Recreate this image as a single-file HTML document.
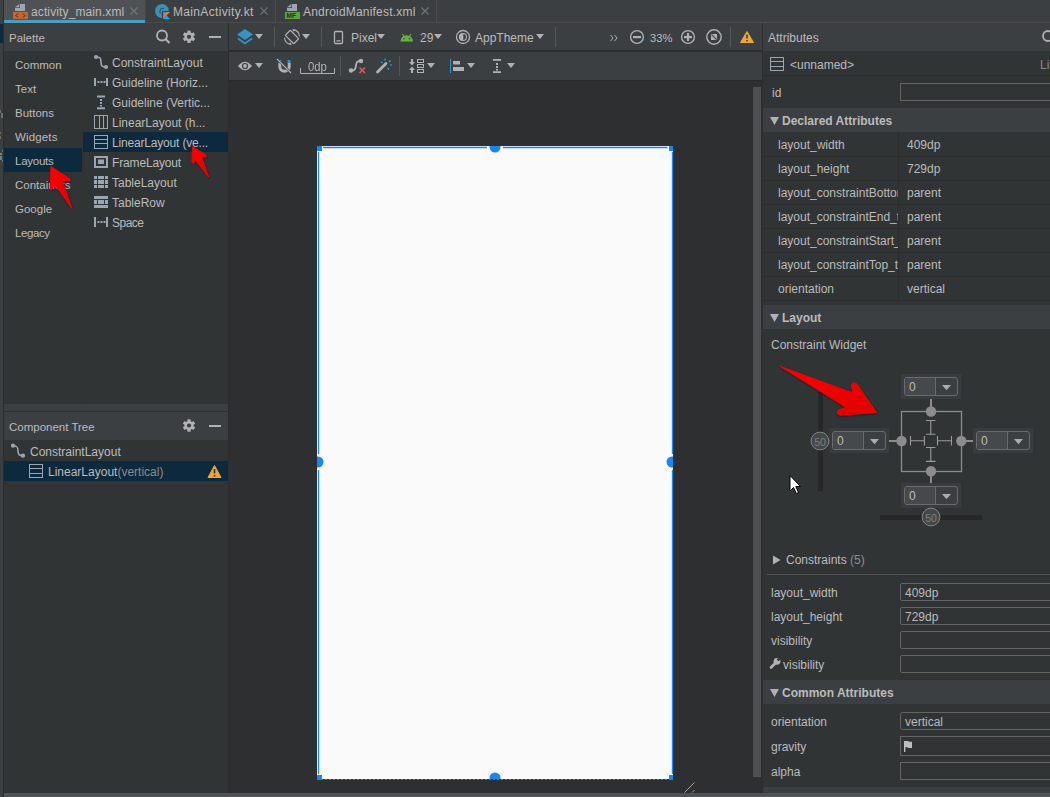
<!DOCTYPE html>
<html><head><meta charset="utf-8">
<style>
*{box-sizing:border-box;margin:0;padding:0}
html,body{width:1050px;height:797px;overflow:hidden;background:#3c3f41}
body{position:relative;font-family:"Liberation Sans",sans-serif;font-size:12px;color:#bbbbbb}
.a{position:absolute}
.t{position:absolute;white-space:nowrap;line-height:14px}
svg{position:absolute;overflow:visible}
</style></head><body>

<!-- left strip -->
<div class="a" style="left:0;top:0;width:3px;height:797px;background:#3c3f41"></div>
<div class="a" style="left:0;top:24px;width:3px;height:19px;background:#0d293e"></div>
<div class="a" style="left:3px;top:0;width:1px;height:797px;background:#2b2d2f"></div>

<svg style="left:0;top:0" width="4" height="200">
  <rect x="0" y="110" width="1" height="3" fill="#8a7a60" opacity="0.8"/>
  <rect x="1.5" y="113" width="1.2" height="5" fill="#9fb0b8" opacity="0.7"/>
  <rect x="0" y="132" width="1" height="2" fill="#8a7a60" opacity="0.7"/>
  <rect x="0" y="136" width="1" height="3" fill="#8a7a60" opacity="0.7"/>
  <rect x="2" y="150" width="1" height="1.5" fill="#7aa0c0" opacity="0.7"/>
  <rect x="0" y="153" width="2" height="2" fill="#a0a0a0" opacity="0.7"/>
  <rect x="0" y="156" width="2" height="4" fill="#9aabb5" opacity="0.6"/>
  <rect x="2" y="160" width="1" height="1.5" fill="#7aa0c0" opacity="0.7"/>
</svg>
<!-- tab bar -->
<div class="a" style="left:4px;top:0;width:1046px;height:23px;background:#3c3f41"></div>
<div class="a" style="left:4px;top:22px;width:1046px;height:1px;background:#4b4b4c"></div>
<div class="a" style="left:4px;top:0;width:141px;height:23px;background:#4e5254"></div>
<div class="a" style="left:4px;top:20px;width:141px;height:3px;background:#4a9fc0"></div>
<div class="a" style="left:145px;top:0;width:1px;height:23px;background:#454546"></div>
<div class="a" style="left:275px;top:0;width:1px;height:22px;background:#4b4b4c"></div>
<div class="a" style="left:436px;top:0;width:1px;height:22px;background:#4b4b4c"></div>


<!-- tab contents -->
<svg style="left:0;top:0" width="450" height="23">
  <!-- xml icon -->
  <path d="M20 4 H25 V11 H15 V8 H20 Z" fill="#9aa7b0"/>
  <path d="M15 7.3 L19.3 4 V7.3 Z" fill="#9aa7b0"/>
  <rect x="13" y="12" width="15" height="7" fill="#cc6633" opacity="0.95"/>
  <path d="M18 13.5 L16 15.5 L18 17.5 M23 13.5 L25 15.5 L23 17.5" stroke="#2b2b2b" stroke-width="1" fill="none"/>
  <!-- close -->
  <path d="M130.5 7.5 L137.5 14.5 M137.5 7.5 L130.5 14.5" stroke="#6d7578" stroke-width="1.1"/>
  <!-- kotlin activity icon -->
  <circle cx="162" cy="11" r="7" fill="#3e8fb0"/>
  <path d="M163.8 8.6 A2.8 2.8 0 1 0 161.5 13.8" fill="none" stroke="#28424d" stroke-width="0.9"/>
  <rect x="162" y="11" width="9" height="9" fill="#3c3f41"/>
  <defs><linearGradient id="kg" x1="1" y1="0" x2="0" y2="1"><stop offset="0" stop-color="#ff8a00"/><stop offset="0.6" stop-color="#f06a50"/><stop offset="1" stop-color="#d05ad0"/></linearGradient></defs>
  <path d="M163 12 H166.5 L163 15.5 Z" fill="#08b0f8"/>
  <path d="M166.5 12 H170 L163 19 V15.5 Z" fill="url(#kg)"/>
  <path d="M163 19 L166.5 15.5 L170 19 Z" fill="#08b0f8"/>
  <path d="M260.5 7.5 L267.5 14.5 M267.5 7.5 L260.5 14.5" stroke="#6d7578" stroke-width="1.1"/>
  <!-- manifest icon -->
  <path d="M292 4 H297 V11 H287 V8 H292 Z" fill="#9aa7b0"/>
  <path d="M287 7.3 L291.3 4 V7.3 Z" fill="#9aa7b0"/>
  <rect x="285" y="12" width="15" height="7" fill="#62b543" opacity="0.85"/>
  <text x="286.5" y="18.3" font-family="Liberation Sans" font-size="6.5" font-weight="bold" fill="#2b2b2b">MF</text>
  <path d="M421.5 7.5 L428.5 14.5 M428.5 7.5 L421.5 14.5" stroke="#6d7578" stroke-width="1.1"/>
</svg>
<div class="t" style="left:31px;top:5px;letter-spacing:0.12px">activity_main.xml</div>
<div class="t" style="left:173px;top:5px;letter-spacing:0.33px">MainActivity.kt</div>
<div class="t" style="left:303px;top:5px;letter-spacing:0.2px">AndroidManifest.xml</div>

<!-- palette panel -->
<div class="a" style="left:4px;top:23px;width:224px;height:28px;background:#3c3f41"></div>
<div class="a" style="left:4px;top:51px;width:224px;height:353px;background:#313435"></div>
<div class="a" style="left:82px;top:51px;width:1px;height:353px;background:#2f3133"></div>
<div class="a" style="left:4px;top:404px;width:224px;height:7px;background:#3c3f41"></div>
<div class="a" style="left:4px;top:411px;width:224px;height:1px;background:#2b2d2f"></div>
<div class="a" style="left:4px;top:412px;width:224px;height:28px;background:#3c3f41"></div>
<div class="a" style="left:4px;top:440px;width:224px;height:353px;background:#313435"></div>
<div class="a" style="left:228px;top:23px;width:1px;height:770px;background:#2b2d2f"></div>


<!-- palette content -->
<div class="t" style="left:9px;top:31px;font-size:11.5px">Palette</div>
<svg style="left:0;top:0" width="230" height="52">
  <circle cx="162" cy="35.5" r="5" fill="none" stroke="#afb1b3" stroke-width="1.8"/>
  <path d="M165.5 39 L169.5 43" stroke="#afb1b3" stroke-width="2.2"/>
  <g transform="translate(189 36.8)" fill="#afb1b3">
    <circle r="4.6"/>
    <rect x="-1.6" y="-6.2" width="3.2" height="12.4"/>
    <rect x="-1.6" y="-6.2" width="3.2" height="12.4" transform="rotate(60)"/>
    <rect x="-1.6" y="-6.2" width="3.2" height="12.4" transform="rotate(120)"/>
  </g>
  <circle cx="189" cy="36.8" r="2.1" fill="#3c3f41"/>
  <rect x="209" y="36" width="12" height="2" fill="#afb1b3"/>
</svg>
<div class="a" style="left:4px;top:148px;width:78px;height:24px;background:#0d293e"></div>
<div class="a" style="left:83px;top:132px;width:145px;height:20px;background:#0d293e"></div>
<div class="t" style="left:15px;top:58px;font-size:11.5px">Common</div>
<div class="t" style="left:15px;top:82px;font-size:11.5px">Text</div>
<div class="t" style="left:15px;top:106px;font-size:11.5px">Buttons</div>
<div class="t" style="left:15px;top:130px;font-size:11.5px;letter-spacing:0.15px">Widgets</div>
<div class="t" style="left:15px;top:154px;font-size:11.5px;letter-spacing:-0.25px">Layouts</div>
<div class="t" style="left:15px;top:178px;font-size:11.5px">Containers</div>
<div class="t" style="left:15px;top:202px;font-size:11.5px">Google</div>
<div class="t" style="left:15px;top:226px;font-size:11.5px;letter-spacing:-0.4px">Legacy</div>

<div class="t" style="left:112px;top:56px;">ConstraintLayout</div>
<div class="t" style="left:112px;top:76px;">Guideline (Horiz...</div>
<div class="t" style="left:112px;top:96px;">Guideline (Vertic...</div>
<div class="t" style="left:112px;top:116px;">LinearLayout (h...</div>
<div class="t" style="left:112px;top:136px;letter-spacing:-0.18px">LinearLayout (ve...</div>
<div class="t" style="left:112px;top:156px;letter-spacing:-0.15px">FrameLayout</div>
<div class="t" style="left:112px;top:176px;">TableLayout</div>
<div class="t" style="left:112px;top:196px;">TableRow</div>
<div class="t" style="left:112px;top:216px;letter-spacing:-0.5px">Space</div>
<svg style="left:0;top:0" width="230" height="240" fill="none" stroke="#9aa7b0">
  <!-- constraint layout -->
  <path d="M96 57 C100 57 101 58 101 62 C101 66 102 67 106 67" stroke-width="1.6"/>
  <circle cx="96" cy="57" r="2.1" fill="#9aa7b0" stroke="none"/>
  <circle cx="106" cy="67" r="2.1" fill="#9aa7b0" stroke="none"/>
  <!-- guideline horiz -->
  <g fill="#9aa7b0" stroke="none">
    <rect x="94" y="78" width="2" height="8"/><rect x="106" y="78" width="2" height="8"/>
    <rect x="97.5" y="81" width="2" height="2"/><rect x="100.5" y="81" width="2" height="2"/><rect x="103.5" y="81" width="2" height="2"/>
  <!-- guideline vert -->
    <rect x="97" y="95.5" width="8" height="2"/><rect x="97" y="107.3" width="8" height="2"/>
    <rect x="100" y="99" width="2" height="2"/><rect x="100" y="102" width="2" height="2"/><rect x="100" y="105" width="2" height="1.5"/>
  </g>
  <!-- linear h -->
  <rect x="94.5" y="115.5" width="13" height="13"/>
  <path d="M99.5 116 V128 M103.5 116 V128"/>
  <!-- linear v -->
  <rect x="94.5" y="135.5" width="13" height="13"/>
  <path d="M95 139.5 H107 M95 143.5 H107"/>
  <g fill="#9aa7b0" stroke="none">
  <!-- frame -->
    <path d="M94 156 H108 V168 H94 Z M96 158 V166 H106 V158 Z" fill-rule="evenodd"/>
    <rect x="98" y="159.5" width="6" height="4.5"/>
  <!-- table layout -->
    <rect x="94" y="176" width="3" height="3"/><rect x="98" y="176" width="6" height="3"/><rect x="105" y="176" width="3" height="3"/>
    <rect x="94" y="180" width="3" height="4"/><rect x="98" y="180" width="6" height="4"/><rect x="105" y="180" width="3" height="4"/>
    <rect x="94" y="185" width="3" height="3"/><rect x="98" y="185" width="6" height="3"/><rect x="105" y="185" width="3" height="3"/>
  <!-- table row -->
    <rect x="94" y="196" width="14" height="3"/>
    <rect x="94" y="200" width="3" height="4"/><rect x="98" y="200" width="6" height="4"/><rect x="105" y="200" width="3" height="4"/>
    <rect x="94" y="205" width="14" height="3"/>
  <!-- space -->
    <rect x="94" y="217" width="2" height="10"/><rect x="106" y="217" width="2" height="10"/>
    <rect x="97.5" y="221" width="2" height="2"/><rect x="100.5" y="221" width="2" height="2"/><rect x="103.5" y="221" width="2" height="2"/>
  </g>
</svg>


<!-- component tree -->
<div class="t" style="left:9px;top:420px;font-size:11.5px">Component Tree</div>
<svg style="left:0;top:400px" width="230" height="90">
  <g transform="translate(189 25.5)" fill="#afb1b3">
    <circle r="4.6"/>
    <rect x="-1.6" y="-6.2" width="3.2" height="12.4"/>
    <rect x="-1.6" y="-6.2" width="3.2" height="12.4" transform="rotate(60)"/>
    <rect x="-1.6" y="-6.2" width="3.2" height="12.4" transform="rotate(120)"/>
  </g>
  <circle cx="189" cy="25.5" r="2.1" fill="#3c3f41"/>
  <rect x="209" y="25" width="12" height="2" fill="#afb1b3"/>
</svg>
<div class="a" style="left:4px;top:461px;width:224px;height:20px;background:#0d293e"></div>
<div class="t" style="left:30px;top:445px;">ConstraintLayout</div>
<div class="t" style="left:48px;top:465px;">LinearLayout<span style="color:#8c8c8c">(vertical)</span></div>
<svg style="left:0;top:440px" width="230" height="45" fill="none" stroke="#9aa7b0">
  <path d="M13 5.7 C17 5.7 18 7 18 10.7 C18 14.5 19 15.7 23 15.7" stroke-width="1.6"/>
  <circle cx="13" cy="5.7" r="2.1" fill="#9aa7b0" stroke="none"/>
  <circle cx="23" cy="15.7" r="2.1" fill="#9aa7b0" stroke="none"/>
  <rect x="29.5" y="24.5" width="13" height="13"/>
  <path d="M30 28.5 H42 M30 33.5 H42"/>
  <path d="M214.5 25.5 L221 37.5 L208 37.5 Z" fill="#f0a732" stroke="#f0a732" stroke-width="1" stroke-linejoin="round"/>
  <path d="M214.5 29 V33.5 M214.5 35 V36.5" stroke="#2b2b2b" stroke-width="1.6"/>
</svg>

<!-- design toolbars -->
<div class="a" style="left:229px;top:23px;width:533px;height:27px;background:#3c3f41"></div>
<div class="a" style="left:229px;top:50px;width:533px;height:2px;background:#2b2d2f"></div>
<div class="a" style="left:229px;top:52px;width:533px;height:28px;background:#3c3f41"></div>
<div class="a" style="left:229px;top:80px;width:533px;height:713px;background:#2e2f31"></div>
<div class="a" style="left:229px;top:80px;width:533px;height:1px;background:#292a2b"></div>


<!-- toolbar 1 content -->
<svg style="left:0;top:0" width="770" height="85">
  <g fill="#afb1b3">
    <!-- separators -->
    <rect x="274" y="27" width="1" height="20" fill="#55585a"/>
    <rect x="321" y="27" width="1" height="20" fill="#55585a"/>
    <rect x="555" y="27" width="1" height="20" fill="#55585a"/>
    <rect x="730" y="27" width="1" height="20" fill="#55585a"/>
    <!-- triangles -->
    <path d="M255 34 H263 L259 39 Z"/>
    <path d="M302 34 H310 L306 39 Z"/>
    <path d="M377 34 H385 L381 39 Z"/>
    <path d="M434 34 H442 L438 39 Z"/>
    <path d="M536 34 H544 L540 39 Z"/>
  </g>
  <!-- layers -->
  <path d="M237 34.5 L245 29 L253 34.5 L245 40 Z" fill="#3592c4"/>
  <path d="M238 38.5 L245 43.5 L252 38.5" fill="none" stroke="#3592c4" stroke-width="1.8"/>
  <!-- rotate -->
  <g transform="translate(292 37) rotate(-45)" fill="none" stroke="#afb1b3" stroke-width="1.2">
    <rect x="-3.6" y="-6" width="7.2" height="12" rx="0.8"/>
  </g>
  <path d="M293.3 29.6 A7.5 7.5 0 0 1 299.5 36.3" fill="none" stroke="#afb1b3" stroke-width="1.1"/>
  <path d="M290.7 44.4 A7.5 7.5 0 0 1 284.5 37.7" fill="none" stroke="#afb1b3" stroke-width="1.1"/>
  <path d="M292.5 28.8 L295.5 30.2 L293.2 31.5 Z M291.5 45.2 L288.5 43.8 L290.8 42.5 Z" fill="#afb1b3"/>
  <!-- phone -->
  <rect x="334.5" y="31.5" width="8" height="12" rx="1" fill="none" stroke="#afb1b3" stroke-width="1.3"/>
  <rect x="336.5" y="40.2" width="4" height="1.2" fill="#afb1b3"/>
  <!-- android -->
  <path d="M400.5 41.5 A6.2 6.2 0 0 1 412.9 41.5 Z" fill="#62b543"/>
  <path d="M402.5 34 L403.8 36 M411 34 L409.7 36" stroke="#62b543" stroke-width="1.2"/>
  <circle cx="404" cy="38.8" r="0.8" fill="#3c3f41"/><circle cx="409.4" cy="38.8" r="0.8" fill="#3c3f41"/>
  <!-- theme -->
  <circle cx="463" cy="37" r="6.5" fill="none" stroke="#afb1b3" stroke-width="1.3"/>
  <circle cx="463" cy="37" r="3.5" fill="none" stroke="#afb1b3" stroke-width="1.1"/>
  <path d="M463.3 33 A4 4 0 0 0 463.3 41 Z" fill="#afb1b3"/>
  <!-- chevrons -->
  <path d="M610.5 35 L613 38 L610.5 41 M614.5 35 L617 38 L614.5 41" fill="none" stroke="#afb1b3" stroke-width="1"/>
  <!-- zoom -->
  <circle cx="637" cy="37" r="6.4" fill="none" stroke="#afb1b3" stroke-width="1.4"/>
  <rect x="633" y="36" width="8" height="2.2" fill="#afb1b3"/>
  <circle cx="688" cy="37" r="6.4" fill="none" stroke="#afb1b3" stroke-width="1.4"/>
  <rect x="684" y="36" width="8" height="2.2" fill="#afb1b3"/>
  <rect x="686.9" y="33" width="2.2" height="8" fill="#afb1b3"/>
  <circle cx="714" cy="37" r="7.2" fill="none" stroke="#afb1b3" stroke-width="1.4"/>
  <rect x="711" y="34" width="6" height="6" fill="#afb1b3"/>
  <path d="M711.6 34.6 L716.6 39.6" stroke="#3c3f41" stroke-width="1.1"/>
  <!-- warning -->
  <path d="M747 31.5 L753.5 42.5 L740.5 42.5 Z" fill="#f0a732" stroke="#f0a732" stroke-width="1" stroke-linejoin="round"/>
  <path d="M747 34.5 V38.5 M747 40 V41.5" stroke="#3c3f41" stroke-width="1.6"/>
</svg>
<div class="t" style="left:351px;top:31px;">Pixel</div>
<div class="t" style="left:420px;top:31px;">29</div>
<div class="t" style="left:475px;top:31px;">AppTheme</div>
<div class="t" style="left:650px;top:31px;font-size:11.2px">33%</div>

<!-- toolbar 2 content -->
<svg style="left:0;top:0" width="770" height="85">
  <g fill="#afb1b3">
    <rect x="340" y="56" width="1" height="20" fill="#55585a"/>
    <rect x="399" y="56" width="1" height="20" fill="#55585a"/>
    <path d="M255 63 H263 L259 68 Z"/>
    <path d="M427 63 H435 L431 68 Z"/>
    <path d="M467 63 H475 L471 68 Z"/>
    <path d="M507 63 H515 L511 68 Z"/>
  </g>
  <!-- eye -->
  <path d="M238 66 Q245 57.5 252 66 Q245 74.5 238 66 Z" fill="#afb1b3"/>
  <circle cx="245" cy="66" r="3.1" fill="#3c3f41"/>
  <circle cx="245" cy="66" r="1.9" fill="#afb1b3"/>
  <!-- magnet -->
  <path d="M279.8 63 V66.5 A4.7 4.7 0 0 0 289.2 66.5 V63" fill="none" stroke="#afb1b3" stroke-width="3"/>
  <rect x="278.3" y="60" width="3" height="2.5" fill="#3592c4"/>
  <rect x="287.5" y="60" width="3" height="3" fill="#3592c4"/>
  <path d="M277 59 L291 73" stroke="#3c3f41" stroke-width="2.4"/>
  <path d="M277 59 L291 73" stroke="#afb1b3" stroke-width="1.1"/>
  <!-- ruler -->
  <path d="M300.5 68 V73.5 H334.5 V68" fill="none" stroke="#afb1b3" stroke-width="1"/>
  <!-- constraint x -->
  <path d="M351 70.5 C355 70.5 355.5 69 356 65.5 C356.5 62 357 61 361 61" fill="none" stroke="#afb1b3" stroke-width="1.8"/>
  <circle cx="351" cy="70.5" r="2.2" fill="#afb1b3"/><circle cx="361" cy="61" r="2.2" fill="#afb1b3"/>
  <path d="M359.5 67.5 L365 73 M365 67.5 L359.5 73" stroke="#e05555" stroke-width="1.7"/>
  <!-- wand -->
  <path d="M377.5 72 L386 63.5" stroke="#afb1b3" stroke-width="2.8" stroke-linecap="round"/>
  <path d="M385 60.5 V58.5 M389 62 L390.5 60.5 M390 65 H392 M387.5 68 L389 69.5 M381 62 L382.5 63" stroke="#3ea3dc" stroke-width="1.1"/>
  <!-- pack -->
  <path d="M411 59 H413 V62 H415 L412 65.5 L409 62 H411 Z M411 73 H413 V70 H415 L412 66.5 L409 70 H411 Z" fill="#afb1b3"/>
  <rect x="417.5" y="59.5" width="6" height="3" fill="none" stroke="#afb1b3" stroke-width="1"/>
  <rect x="417.5" y="64.5" width="6" height="3" fill="none" stroke="#afb1b3" stroke-width="1"/>
  <rect x="417.5" y="69.5" width="6" height="3" fill="none" stroke="#afb1b3" stroke-width="1"/>
  <!-- align -->
  <rect x="450" y="59" width="1" height="14" fill="#3592c4"/>
  <rect x="453" y="61" width="7" height="3.5" fill="#afb1b3"/>
  <rect x="453" y="67" width="11" height="4" fill="#afb1b3"/>
  <!-- guideline -->
  <rect x="493" y="59" width="8" height="1.8" fill="#afb1b3"/>
  <rect x="493" y="71.2" width="8" height="1.8" fill="#afb1b3"/>
  <rect x="496" y="63" width="2" height="2" fill="#afb1b3"/><rect x="496" y="66" width="2" height="2" fill="#afb1b3"/><rect x="496" y="69" width="2" height="1.5" fill="#afb1b3"/>
</svg>
<div class="t" style="left:307.5px;top:60px;font-size:13.5px;color:#afb1b3;transform:scaleX(0.84);transform-origin:0 0;-webkit-font-smoothing:antialiased">0dp</div>


<!-- design surface content -->
<div class="a" style="left:753px;top:87px;width:8px;height:690px;background:#4f5051"></div>
<div class="a" style="left:317px;top:146px;width:356px;height:633px;background:#fafafa"></div>
<svg style="left:0;top:0" width="760" height="797">
  <g fill="none" stroke="#1a86f0" stroke-width="1.3">
    <path d="M323 147.5 H487 M503 147.5 H667.5"/>
    <path d="M318.5 152 V454 M318.5 470 V774"/>
    <path d="M672.5 152 V454 M672.5 470 V774"/>
  </g>
  <rect x="317" y="146" width="5" height="5" fill="#1a86f0"/>
  <rect x="669" y="146" width="4" height="5" fill="#1a86f0"/>
  <rect x="317" y="775" width="5" height="5" fill="#1a86f0"/>
  <rect x="669" y="775" width="4" height="5" fill="#1a86f0"/>
  <clipPath id="cp"><rect x="317" y="146" width="356" height="633"/></clipPath>
  <g clip-path="url(#cp)" fill="#1a86f0" stroke="#fcfcfc" stroke-width="1.3">
    <circle cx="495" cy="147" r="6.2"/>
    <circle cx="318" cy="462" r="6.2"/>
    <circle cx="672" cy="462" r="6.2"/>
    <circle cx="495" cy="778" r="6.2"/>
  </g>
  <path d="M317 779.5 H669" stroke="#1a86f0" fill="none" stroke-dasharray="2 2" stroke-width="1.1"/>
  <path d="M684.5 792.5 L694.5 782.5 M692 792.5 L694.5 790" stroke="#b0b0b0" stroke-width="0.9"/>
</svg>

<!-- attributes panel -->
<div class="a" style="left:762px;top:23px;width:1px;height:770px;background:#2b2d2f"></div>
<div class="a" style="left:763px;top:23px;width:287px;height:28px;background:#3c3f41"></div>
<div class="a" style="left:763px;top:51px;width:287px;height:742px;background:#313435"></div>


<!-- attributes content -->
<div class="t" style="left:768px;top:31px;">Attributes</div>
<svg style="left:1030px;top:28px" width="20" height="20"><circle cx="18" cy="8" r="5" fill="none" stroke="#afb1b3" stroke-width="1.8"/></svg>
<div class="a" style="left:763px;top:75px;width:287px;height:1px;background:#2e2d2e"></div>
<svg style="left:0;top:0" width="1050" height="800" fill="none" stroke="#9aa7b0">
  <rect x="770.5" y="57.5" width="13" height="13"/>
  <path d="M771 61.5 H783 M771 66.5 H783"/>
</svg>
<div class="t" style="left:790px;top:58px;">&lt;unnamed&gt;</div>
<div class="t" style="left:1040px;top:58px;color:#8c8c8c">Li</div>
<div class="t" style="left:772px;top:86px;">id</div>
<div class="a" style="left:900px;top:83px;width:160px;height:18px;border:1px solid #646464;background:#313435"></div>

<div class="a" style="left:763px;top:108px;width:287px;height:24px;background:#3c3f41"></div>
<div class="t" style="left:782px;top:114px;font-weight:bold;">Declared Attributes</div>

<div class="a" style="left:898px;top:132px;width:1px;height:168px;background:#2b2d2f"></div>
<div class="a" style="left:763px;top:156px;width:287px;height:1px;background:#2b2d2f"></div>
<div class="a" style="left:763px;top:180px;width:287px;height:1px;background:#2b2d2f"></div>
<div class="a" style="left:763px;top:204px;width:287px;height:1px;background:#2b2d2f"></div>
<div class="a" style="left:763px;top:228px;width:287px;height:1px;background:#2b2d2f"></div>
<div class="a" style="left:763px;top:252px;width:287px;height:1px;background:#2b2d2f"></div>
<div class="a" style="left:763px;top:276px;width:287px;height:1px;background:#2b2d2f"></div>
<div class="a" style="left:763px;top:300px;width:287px;height:1px;background:#2b2d2f"></div>
<div class="a" style="left:778px;top:132px;width:120px;height:168px;overflow:hidden">
  <div class="t" style="left:0;top:6px;">layout_width</div>
  <div class="t" style="left:0;top:30px;">layout_height</div>
  <div class="t" style="left:0;top:54px;">layout_constraintBottom_toBottomOf</div>
  <div class="t" style="left:0;top:78px;">layout_constraintEnd_toEndOf</div>
  <div class="t" style="left:0;top:102px;">layout_constraintStart_toStartOf</div>
  <div class="t" style="left:0;top:126px;">layout_constraintTop_toTopOf</div>
  <div class="t" style="left:0;top:150px;">orientation</div>
</div>
<div class="t" style="left:907px;top:138px;">409dp</div>
<div class="t" style="left:907px;top:162px;">729dp</div>
<div class="t" style="left:907px;top:186px;">parent</div>
<div class="t" style="left:907px;top:210px;">parent</div>
<div class="t" style="left:907px;top:234px;">parent</div>
<div class="t" style="left:907px;top:258px;">parent</div>
<div class="t" style="left:907px;top:282px;">vertical</div>

<div class="a" style="left:763px;top:305px;width:287px;height:24px;background:#3c3f41"></div>
<div class="t" style="left:782px;top:311px;font-weight:bold;">Layout</div>
<div class="t" style="left:771px;top:338px;">Constraint Widget</div>

<div class="t" style="left:786px;top:553px;">Constraints <span style="color:#8c8c8c">(5)</span></div>
<div class="a" style="left:767px;top:574px;width:283px;height:1px;background:#505253"></div>

<div class="t" style="left:771px;top:586px;">layout_width</div>
<div class="t" style="left:771px;top:610px;">layout_height</div>
<div class="t" style="left:771px;top:634px;">visibility</div>
<div class="t" style="left:783px;top:658px;">visibility</div>
<svg style="left:0;top:0" width="1050" height="800">
  <circle cx="777" cy="661.3" r="3.4" fill="#b4b4b4"/>
  <path d="M776 662.5 L771 667.5" stroke="#b4b4b4" stroke-width="2.6" stroke-linecap="round"/>
  <rect x="777.2" y="658.2" width="2.6" height="2.6" transform="rotate(45 778.5 659.5)" fill="#313435"/>
</svg>
<div class="a" style="left:900px;top:583px;width:160px;height:18px;border:1px solid #646464;border-radius:2px;background:#313435"></div>
<div class="a" style="left:900px;top:607px;width:160px;height:18px;border:1px solid #646464;border-radius:2px;background:#313435"></div>
<div class="a" style="left:900px;top:631px;width:160px;height:18px;border:1px solid #646464;border-radius:2px;background:#313435"></div>
<div class="a" style="left:900px;top:655px;width:160px;height:18px;border:1px solid #646464;border-radius:2px;background:#313435"></div>
<div class="t" style="left:905px;top:586px;">409dp</div>
<div class="t" style="left:905px;top:610px;">729dp</div>

<div class="a" style="left:763px;top:680px;width:287px;height:24px;background:#3c3f41"></div>
<div class="t" style="left:782px;top:686px;font-weight:bold;">Common Attributes</div>
<div class="t" style="left:771px;top:715px;">orientation</div>
<div class="t" style="left:771px;top:740px;">gravity</div>
<div class="t" style="left:771px;top:765px;">alpha</div>
<div class="a" style="left:900px;top:712px;width:160px;height:18px;border:1px solid #646464;border-radius:2.5px;background:#313435"></div>
<div class="a" style="left:900px;top:736px;width:160px;height:20px;border:1px solid #646464;background:#313435"></div>
<div class="a" style="left:900px;top:762px;width:160px;height:18px;border:1px solid #646464;background:#313435"></div>
<div class="t" style="left:905px;top:715px;">vertical</div>
<svg style="left:0;top:0" width="1050" height="800">
  <rect x="904" y="741" width="1.4" height="11" fill="#bdbdbd"/>
  <path d="M905 741 H908 L909 741.8 H912 V748 H908.5 L907.5 747.2 H905 Z" fill="#bdbdbd"/>
</svg>
<div class="a" style="left:763px;top:787px;width:287px;height:6px;background:#3c3f41"></div>

<svg style="left:0;top:0" width="1050" height="800" fill="#afb1b3">
  <path d="M770 117 H779 L774.5 125 Z"/>
  <path d="M770 314 H779 L774.5 322 Z"/>
  <path d="M773 555.5 L780.5 560 L773 564.5 Z"/>
  <path d="M770 689 H779 L774.5 697 Z"/>
</svg>


<!-- constraint widget -->
<svg style="left:0;top:0" width="1050" height="797">
  <rect x="818" y="392" width="5" height="99.5" fill="#262728"/>
  <rect x="880" y="515" width="102" height="5" fill="#262728"/>
  <g stroke="#8c8c8c" fill="none">
    <rect x="901.5" y="411.5" width="60" height="60" stroke-width="1.3"/>
    <path d="M931 399 V411 M931 471 V483 M889 441 H901 M961 441 H973" stroke-width="2"/>
  </g>
  <g fill="#8c8c8c">
    <circle cx="931" cy="411.5" r="5.2"/>
    <circle cx="931" cy="471.3" r="5.2"/>
    <circle cx="901.5" cy="441" r="5.2"/>
    <circle cx="961.3" cy="441" r="5.2"/>
  </g>
  <g stroke="#9a9a9a" stroke-width="1.1" fill="none">
    <path d="M926 420.5 H935.5 M926 434.3 H935.5 M930.8 420.5 V434.3"/>
    <path d="M926 447.5 H935.5 M926 461.4 H935.5 M930.8 447.5 V461.4"/>
    <path d="M910.5 436 V445.5 M924.4 436 V445.5 M910.5 440.7 H924.4"/>
    <path d="M937.5 436 V445.5 M951.5 436 V445.5 M937.5 440.7 H951.5"/>
  </g>
  
  <rect x="901" y="374" width="60" height="25" fill="#393c3e"/>
  <rect x="904.5" y="377.5" width="53" height="18" rx="2.5" fill="#3c3f41" stroke="#6b6b6b" stroke-width="1"/>
  <path d="M907 378 H935.7 V395 H907 A2 2 0 0 1 905 393 V380 A2 2 0 0 1 907 378 Z" fill="#46494b"/>
  <rect x="935" y="378" width="1" height="17" fill="#6b6b6b"/>
  <path d="M942 385 H951 L946.5 390.3 Z" fill="#a9abad"/>
  <text x="909" y="391" font-family="Liberation Sans" font-size="12" fill="#bbbbbb">0</text>
  
  <rect x="829" y="428" width="60" height="25" fill="#393c3e"/>
  <rect x="832.5" y="431.5" width="53" height="18" rx="2.5" fill="#3c3f41" stroke="#6b6b6b" stroke-width="1"/>
  <path d="M835 432 H863.7 V449 H835 A2 2 0 0 1 833 447 V434 A2 2 0 0 1 835 432 Z" fill="#46494b"/>
  <rect x="863" y="432" width="1" height="17" fill="#6b6b6b"/>
  <path d="M870 439 H879 L874.5 444.3 Z" fill="#a9abad"/>
  <text x="837" y="445" font-family="Liberation Sans" font-size="12" fill="#bbbbbb">0</text>
  
  <rect x="973" y="428" width="60" height="25" fill="#393c3e"/>
  <rect x="976.5" y="431.5" width="53" height="18" rx="2.5" fill="#3c3f41" stroke="#6b6b6b" stroke-width="1"/>
  <path d="M979 432 H1007.7 V449 H979 A2 2 0 0 1 977 447 V434 A2 2 0 0 1 979 432 Z" fill="#46494b"/>
  <rect x="1007" y="432" width="1" height="17" fill="#6b6b6b"/>
  <path d="M1014 439 H1023 L1018.5 444.3 Z" fill="#a9abad"/>
  <text x="981" y="445" font-family="Liberation Sans" font-size="12" fill="#bbbbbb">0</text>
  
  <rect x="901" y="483" width="60" height="25" fill="#393c3e"/>
  <rect x="904.5" y="486.5" width="53" height="18" rx="2.5" fill="#3c3f41" stroke="#6b6b6b" stroke-width="1"/>
  <path d="M907 487 H935.7 V504 H907 A2 2 0 0 1 905 502 V489 A2 2 0 0 1 907 487 Z" fill="#46494b"/>
  <rect x="935" y="487" width="1" height="17" fill="#6b6b6b"/>
  <path d="M942 494 H951 L946.5 499.3 Z" fill="#a9abad"/>
  <text x="909" y="500" font-family="Liberation Sans" font-size="12" fill="#bbbbbb">0</text>
  <circle cx="820" cy="441" r="8.9" fill="#45484a" stroke="#858585" stroke-width="1"/>
  <text x="820" y="445.5" text-anchor="middle" font-family="Liberation Sans" font-size="10.5" fill="#7d7d7d">50</text>
  <circle cx="931" cy="517" r="8.9" fill="#45484a" stroke="#858585" stroke-width="1"/>
  <text x="931" y="521.5" text-anchor="middle" font-family="Liberation Sans" font-size="10.5" fill="#7d7d7d">50</text>
</svg>

<!-- bottom bar -->
<div class="a" style="left:4px;top:793px;width:1046px;height:4px;background:#505355"></div>


<!-- red arrows + cursor -->
<svg style="left:0;top:0" width="1050" height="797">
  <defs>
    <filter id="sh" x="-20%" y="-20%" width="140%" height="140%"><feDropShadow dx="0.5" dy="1" stdDeviation="0.8" flood-color="#000" flood-opacity="0.45"/></filter>
    <linearGradient id="rg" x1="0" y1="0" x2="1" y2="1"><stop offset="0" stop-color="#ff0000"/><stop offset="1" stop-color="#e00000"/></linearGradient>
  </defs>
  <g fill="url(#rg)" stroke="#f20000" stroke-width="1" stroke-linejoin="round" filter="url(#sh)">
    <path d="M780.5 366.5 L853 393 L851.5 386.5 Q851 381.5 856.5 383.5 L876.5 412.5 L840 415 Q835.5 414 838.5 410 L846.5 407.5 Z"/>
    <path d="M51 166.5 L69.5 178.5 Q71.5 180.5 68.5 181 L62 180.3 L71.8 208.3 L55.2 184.8 L52 189.2 Q50.5 190.5 50.3 188.2 Z"/>
    <path d="M192.5 146.5 L206 155 Q207.5 156.5 205 157 L201.3 156.6 L208.5 177 L195.4 159.8 L193.5 163 Q192 164 192 162 Z"/>
  </g>
  <!-- cursor -->
  <path d="M790 475.5 V491 L793.5 487.5 L796.3 493.5 L798.5 492.5 L795.8 486.5 L800.5 486.5 Z" fill="#ffffff" stroke="#000000" stroke-width="1" stroke-linejoin="miter"/>
</svg>

</body></html>
